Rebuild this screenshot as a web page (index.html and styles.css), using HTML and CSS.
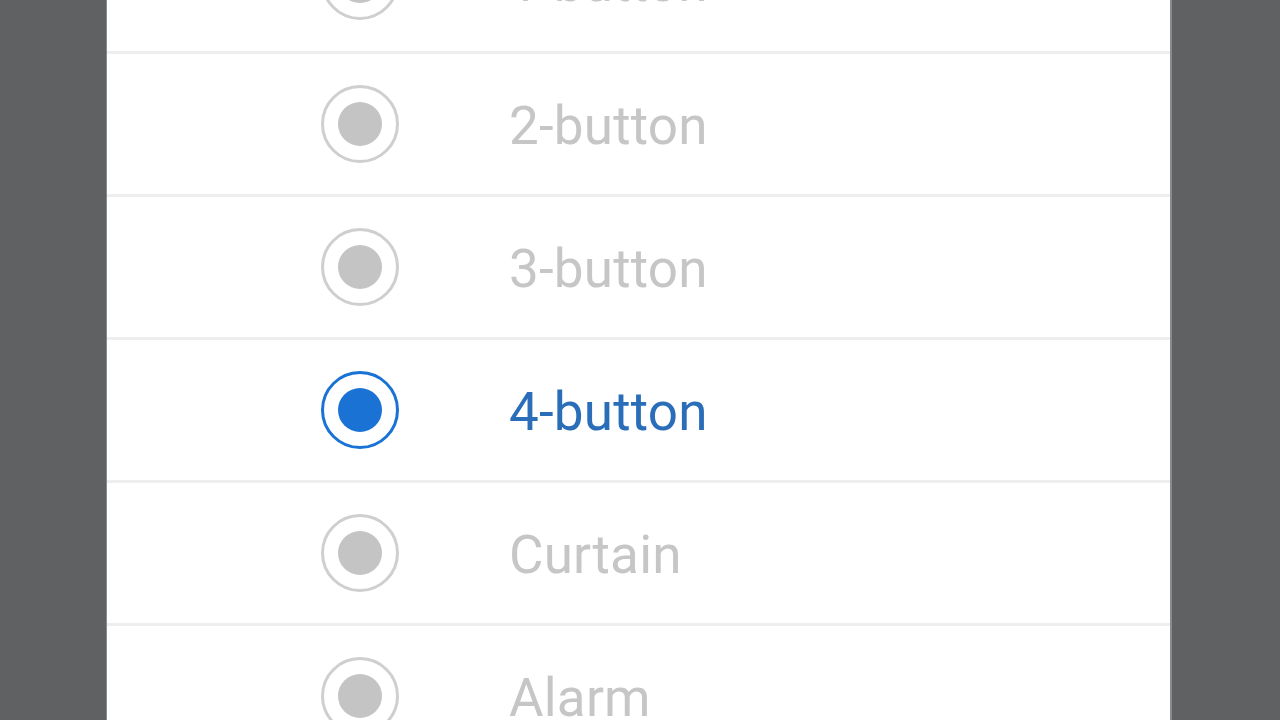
FILE: index.html
```html
<!DOCTYPE html>
<html lang="en">
<head>
    <meta charset="UTF-8">
    <meta name="viewport" content="width=device-width, initial-scale=1.0">
    <title>Switch type</title>
    <link rel="stylesheet" href="styles.css">
</head>
<body>
    <div class="screen">
        <div class="panel">
            <ul class="options">
                <li class="option"><span class="radio"></span><span class="label">1-button</span></li>
                <li class="option"><span class="radio"></span><span class="label">2-button</span></li>
                <li class="option"><span class="radio"></span><span class="label">3-button</span></li>
                <li class="option selected"><span class="radio"></span><span class="label">4-button</span></li>
                <li class="option"><span class="radio"></span><span class="label">Curtain</span></li>
                <li class="option"><span class="radio"></span><span class="label">Alarm</span></li>
            </ul>
        </div>
    </div>
</body>
</html>
```

FILE: styles.css
```css
html, body {
    margin: 0;
    height: 100%;
    overflow: hidden;
}
body {
    background-color: #5f6162;
    font-family: Roboto, "Noto Sans", sans-serif;
}
.screen {
    display: flex;
    height: 100%;
    padding-left: 106px;
}
.panel {
    width: 1066px;
    height: 100%;
    background-color: #fff;
    border-left: 1px solid #8a8b8c;
    border-right: 2px solid #8a8b8c;
    box-sizing: border-box;
    overflow: hidden;
}
.options {
    list-style: none;
    margin: -89px 0 0 0;
    padding: 0;
}
.option {
    display: flex;
    align-items: center;
    height: 140px;
    padding-left: 214px;
    border-bottom: 3px solid #eeeeee;
}
.radio {
    position: relative;
    width: 72px;
    height: 72px;
    border: 3px solid #cfcfcf;
    border-radius: 50%;
    flex-shrink: 0;
}
.radio::after {
    content: "";
    position: absolute;
    left: 14px;
    top: 14px;
    width: 44px;
    height: 44px;
    border-radius: 50%;
    background-color: #c4c4c4;
}
.label {
    margin-left: 110px;
    padding-top: 4px;
    font-size: 53px;
    letter-spacing: 0.2px;
    color: #c6c6c6;
}
.selected .radio {
    border-color: #1a73d4;
}
.selected .radio::after {
    background-color: #1a73d4;
}
.selected .label {
    color: #2a6db8;
}
```
